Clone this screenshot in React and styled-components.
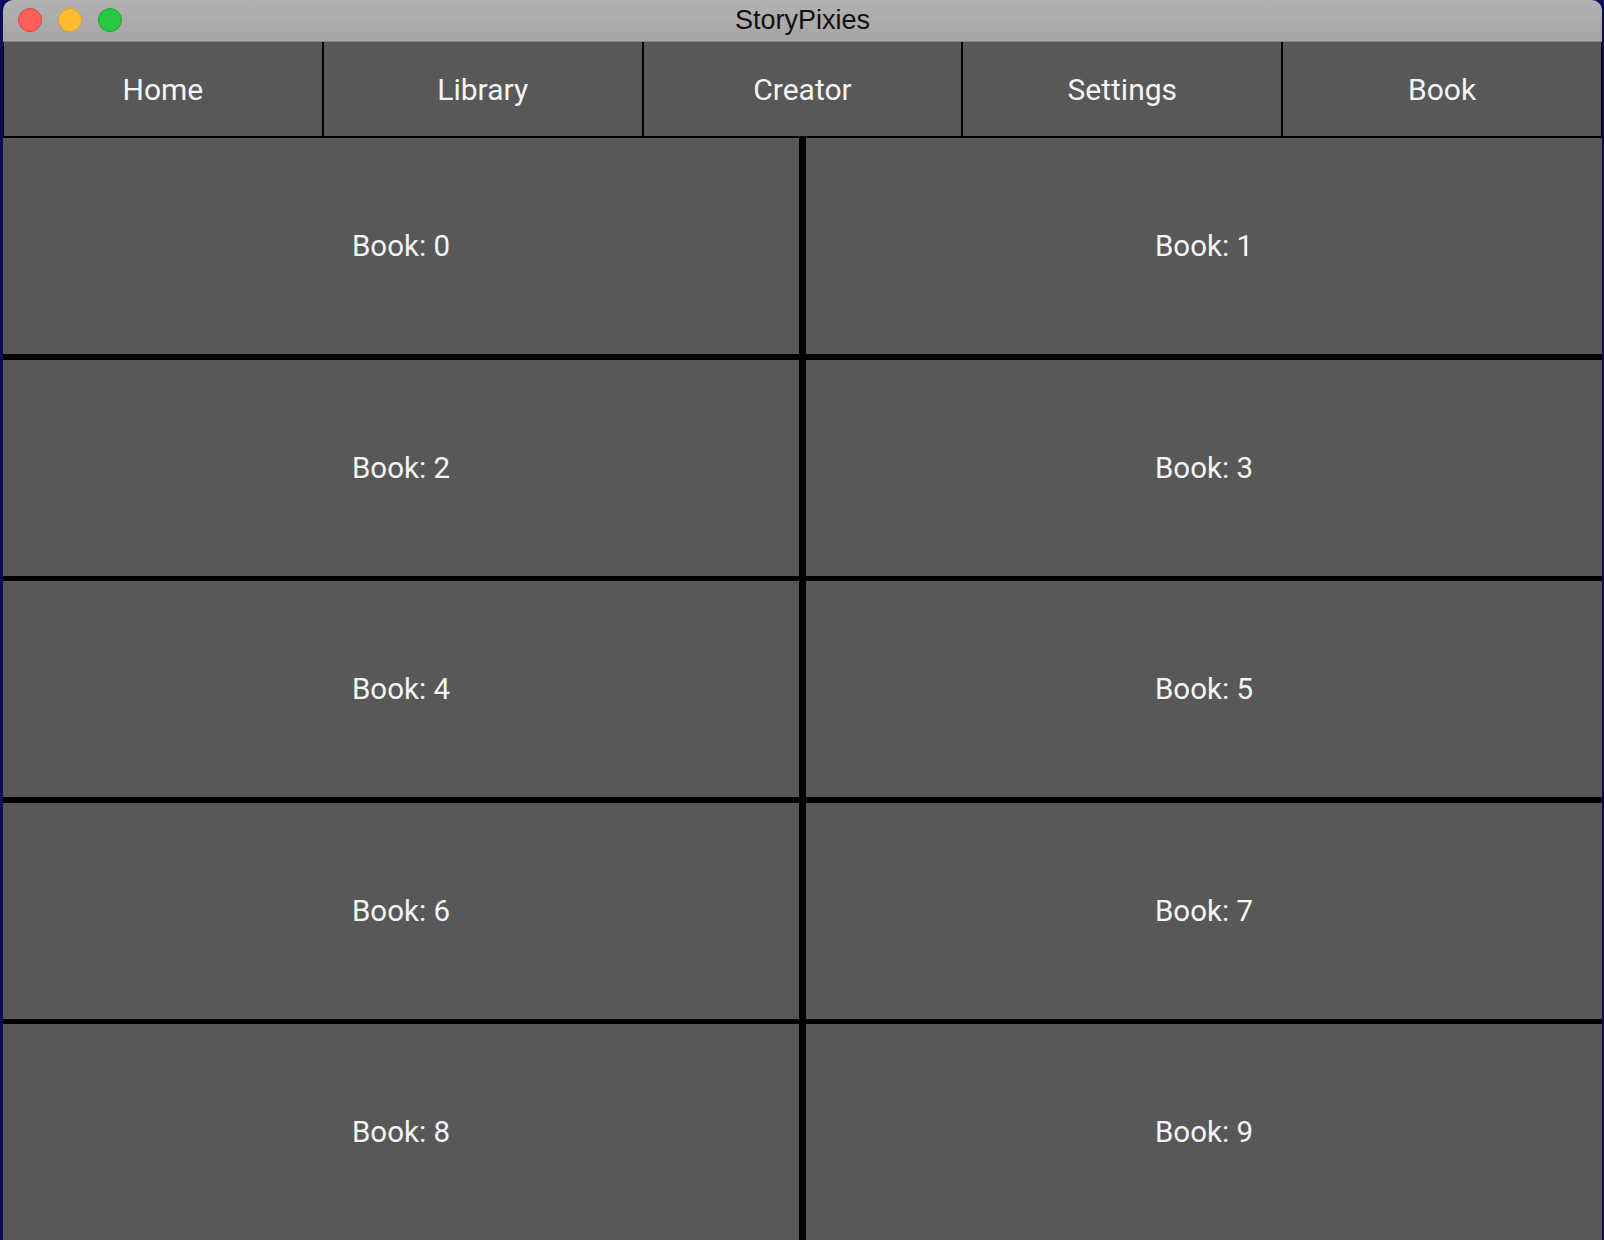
import React from "react";
import styled, { createGlobalStyle } from "styled-components";

const Global = createGlobalStyle`
  html, body { margin: 0; padding: 0; }
  body {
    background: #0b0d5c;
    overflow: hidden;
    height: 1240px;
  }
`;

const Win = styled.div`
  margin-left: 3px;
  width: 1599px;
  height: 1240px;
  background: #000;
  border-radius: 10px 10px 0 0;
  overflow: hidden;
  display: flex;
  flex-direction: column;
`;

const TitleBar = styled.div`
  height: 41px;
  flex: none;
  position: relative;
  display: flex;
  align-items: center;
  justify-content: center;
  background: linear-gradient(#b3b1b3, #a6a4a6);
  border-bottom: 1px solid #8a888a;
  font-family: "Liberation Sans", Arial, sans-serif;
  font-size: 27px;
  color: #111;
`;

const Lights = styled.div`
  position: absolute;
  left: 15px;
  top: 8px;
  display: flex;
  gap: 16px;
`;

const Light = styled.span`
  width: 22px;
  height: 22px;
  border-radius: 50%;
  background: ${(p) => p.$c};
  border: 1px solid ${(p) => p.$b};
`;

const Nav = styled.div`
  height: 96px;
  flex: none;
  display: grid;
  grid-template-columns: repeat(5, 1fr);
  background: #000;
  gap: 2px;
  padding: 0 1px 2px 1px;
  box-sizing: border-box;
`;

const NavButton = styled.div`
  background: #585858;
  display: flex;
  align-items: center;
  justify-content: center;
  font-family: Roboto, "Noto Sans", sans-serif;
  font-size: 30px;
  color: #f4f4f4;
`;

const Grid = styled.div`
  flex: none;
  display: grid;
  grid-template-columns: 1fr 1fr;
  grid-auto-rows: 216px;
  column-gap: 7px;
  row-gap: 5.5px;
`;

const Cell = styled.div`
  background: #585858;
  display: flex;
  align-items: center;
  justify-content: center;
  font-family: Roboto, "Noto Sans", sans-serif;
  font-size: 29.5px;
  color: #f4f4f4;
`;

const navItems = ["Home", "Library", "Creator", "Settings", "Book"];

export default function App() {
  return (
    <>
      <Global />
      <Win>
        <TitleBar>
          <Lights>
            <Light $c="#fe5f57" $b="#e0443e" />
            <Light $c="#febc2e" $b="#dea123" />
            <Light $c="#28c840" $b="#1aab29" />
          </Lights>
          StoryPixies
        </TitleBar>
        <Nav>
          {navItems.map((n) => (
            <NavButton key={n}>{n}</NavButton>
          ))}
        </Nav>
        <Grid>
          {Array.from({ length: 10 }, (_, i) => (
            <Cell key={i}>Book: {i}</Cell>
          ))}
        </Grid>
      </Win>
    </>
  );
}
